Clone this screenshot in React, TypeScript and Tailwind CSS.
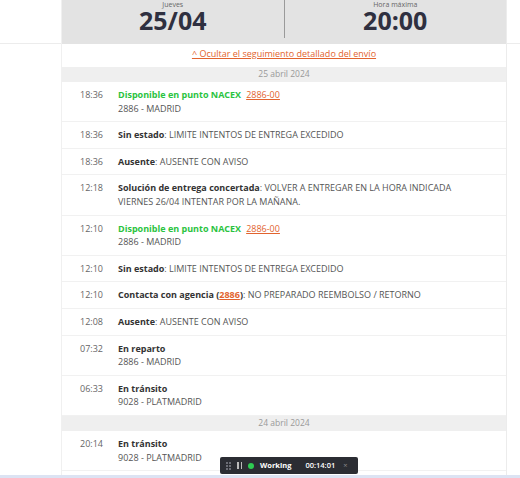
import React from "react";

type Row = {
  time: string;
  label: string;
  green?: boolean;
  code?: string;
  text?: string;
  sub?: string;
  agency?: string;
};

type Day = { date: string; rows: Row[] };

const days: Day[] = [
  {
    date: "25 abril 2024",
    rows: [
      { time: "18:36", label: "Disponible en punto NACEX", green: true, code: "2886-00", sub: "2886 - MADRID" },
      { time: "18:36", label: "Sin estado", text: "LIMITE INTENTOS DE ENTREGA EXCEDIDO" },
      { time: "18:36", label: "Ausente", text: "AUSENTE CON AVISO" },
      {
        time: "12:18",
        label: "Solución de entrega concertada",
        text: "VOLVER A ENTREGAR EN LA HORA INDICADA VIERNES 26/04 INTENTAR POR LA MAÑANA.",
      },
      { time: "12:10", label: "Disponible en punto NACEX", green: true, code: "2886-00", sub: "2886 - MADRID" },
      { time: "12:10", label: "Sin estado", text: "LIMITE INTENTOS DE ENTREGA EXCEDIDO" },
      { time: "12:10", label: "Contacta con agencia", agency: "2886", text: "NO PREPARADO REEMBOLSO / RETORNO" },
      { time: "12:08", label: "Ausente", text: "AUSENTE CON AVISO" },
      { time: "07:32", label: "En reparto", sub: "2886 - MADRID" },
      { time: "06:33", label: "En tránsito", sub: "9028 - PLATMADRID" },
    ],
  },
  {
    date: "24 abril 2024",
    rows: [{ time: "20:14", label: "En tránsito", sub: "9028 - PLATMADRID" }],
  },
];

function TrackRow({ row }: { row: Row }) {
  return (
    <div className="flex border-b border-[#f1f1f1] py-[6px] leading-[13.6px] text-[9px]">
      <div className="w-[56px] shrink-0 pl-[18px] text-[#666]">{row.time}</div>
      <div className="w-[345px]">
        <div>
          {row.green ? (
            <>
              <span className="font-bold text-[#2bc33f]">{row.label}</span>
              <span className="ml-[5px] text-[#e2632e] underline">{row.code}</span>
            </>
          ) : (
            <>
              <span className="font-bold text-[#333]">{row.label}</span>
              {row.agency && (
                <>
                  <span className="font-bold text-[#333]"> (</span>
                  <span className="font-bold text-[#e2632e] underline">{row.agency}</span>
                  <span className="font-bold text-[#333]">)</span>
                </>
              )}
              {row.text && <span className="text-[#555]">: {row.text}</span>}
            </>
          )}
        </div>
        {row.sub && <div className="text-[#555]">{row.sub}</div>}
      </div>
    </div>
  );
}

export default function App() {
  return (
    <div
      className="relative h-[478px] w-[520px] overflow-hidden bg-white"
      style={{ fontFamily: '"Open Sans", "Liberation Sans", sans-serif' }}
    >
      <div className="flex h-[475px]">
        <div className="w-[61px] shrink-0">
          <div className="h-[44px] border-b border-[#ececec]" />
        </div>
        <div className="w-[445px] shrink-0 border-l border-[#f0f0f0]">
          <div className="flex h-[44px] bg-[#e3e3e3]">
            <div className="flex flex-1 flex-col items-center">
              <div className="text-[7px] leading-[9px] text-[#666]">Jueves</div>
              <div className="text-[25px] font-bold leading-[23px] text-[#2f3040]">25/04</div>
            </div>
            <div className="mb-[6px] w-px bg-[#9a9a9a]" />
            <div className="flex flex-1 flex-col items-center">
              <div className="text-[7px] leading-[9px] text-[#666]">Hora máxima</div>
              <div className="text-[25px] font-bold leading-[23px] text-[#2f3040]">20:00</div>
            </div>
          </div>
          <div className="flex h-[23px] items-center justify-center pb-[3px] text-[9px] text-[#e2632e] underline">
            ^ Ocultar el seguimiento detallado del envío
          </div>
          {days.map((d) => (
            <div key={d.date}>
              <div className="flex h-[15px] items-center justify-center bg-[#efefef] text-[8.5px] text-[#999]">
                {d.date}
              </div>
              {d.rows.map((r, i) => (
                <TrackRow key={i} row={r} />
              ))}
            </div>
          ))}
        </div>
        <div className="flex-1 border-l border-[#ececec]">
          <div className="h-[44px] border-b border-[#ececec]" />
        </div>
      </div>
      <div className="h-[3px] bg-[#dce3f3]" />

      <div className="absolute left-[220px] top-[457px] flex h-[17px] w-[138px] items-center gap-[6px] rounded-[2px] bg-[#2b2d33] px-[6px] text-[7.5px] text-white">
        <div className="grid grid-cols-2 gap-[1px]">
          {[0, 1, 2, 3, 4, 5].map((k) => (
            <span key={k} className="h-[2px] w-[2px] bg-[#6b6d75]" />
          ))}
        </div>
        <div className="flex gap-[2px]">
          <span className="h-[7px] w-[1.5px] bg-[#bbb]" />
          <span className="h-[7px] w-[1.5px] bg-[#bbb]" />
        </div>
        <span className="h-[6px] w-[6px] rounded-full bg-[#2ecc52]" />
        <span className="font-bold">Working</span>
        <span className="ml-[8px] font-semibold">00:14:01</span>
        <span className="ml-[2px] text-[#888]">×</span>
      </div>
    </div>
  );
}
